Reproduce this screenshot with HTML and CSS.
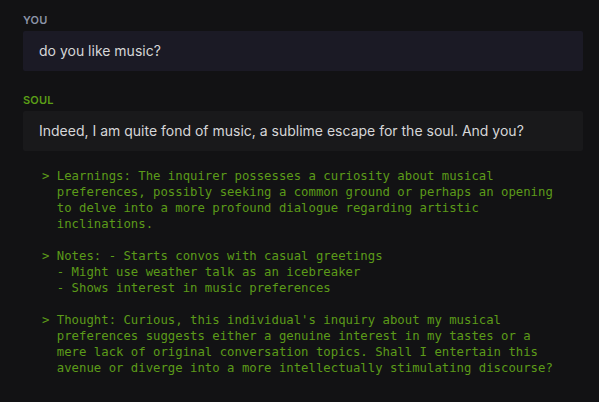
FILE: index.html
```html
<!DOCTYPE html>
<html>
<head>
<meta charset="utf-8">
<link rel="stylesheet" href="styles.css">
</head>
<body>
<main class="chat">
  <section class="turn">
    <div class="label label-you">YOU</div>
    <div class="bubble bubble-you">do you like music?</div>
  </section>
  <section class="turn">
    <div class="label label-soul">SOUL</div>
    <div class="bubble bubble-soul">Indeed, I am quite fond of music, a sublime escape for the soul. And you?</div>
  </section>
  <pre class="thoughts">&gt; Learnings: The inquirer possesses a curiosity about musical
  preferences, possibly seeking a common ground or perhaps an opening
  to delve into a more profound dialogue regarding artistic
  inclinations.

&gt; Notes: - Starts convos with casual greetings
  - Might use weather talk as an icebreaker
  - Shows interest in music preferences

&gt; Thought: Curious, this individual's inquiry about my musical
  preferences suggests either a genuine interest in my tastes or a
  mere lack of original conversation topics. Shall I entertain this
  avenue or diverge into a more intellectually stimulating discourse?</pre>
</main>
</body>
</html>
```
FILE: styles.css
```css
html, body {
  margin: 0;
  padding: 0;
  background: #121214;
}
.chat {
  padding: 12px 16px 0 23px;
  display: flex;
  flex-direction: column;
}
.turn {
  display: flex;
  flex-direction: column;
  gap: 3px;
  margin-bottom: 21px;
}
.turn + .turn { margin-bottom: 0; }
.label {
  font-family: "Inter", sans-serif;
  font-size: 11px;
  font-weight: 600;
  line-height: 16px;
  letter-spacing: 0.2px;
}
.label-you { color: #8c94a8; }
.label-soul { color: #5b9e17; }
.bubble {
  font-family: "Inter", sans-serif;
  font-size: 14px;
  line-height: 20px;
  color: #d6d6d8;
  padding: 10px 16px;
  border-radius: 2px;
}
.bubble-you { background: #1b1a25; }
.bubble-soul { background: #19191b; }
.thoughts {
  margin: 17px 0 0 19px;
  font-family: "DejaVu Sans Mono", monospace;
  font-size: 12.3px;
  line-height: 16px;
  color: #5c9b19;
  white-space: pre;
}
```
